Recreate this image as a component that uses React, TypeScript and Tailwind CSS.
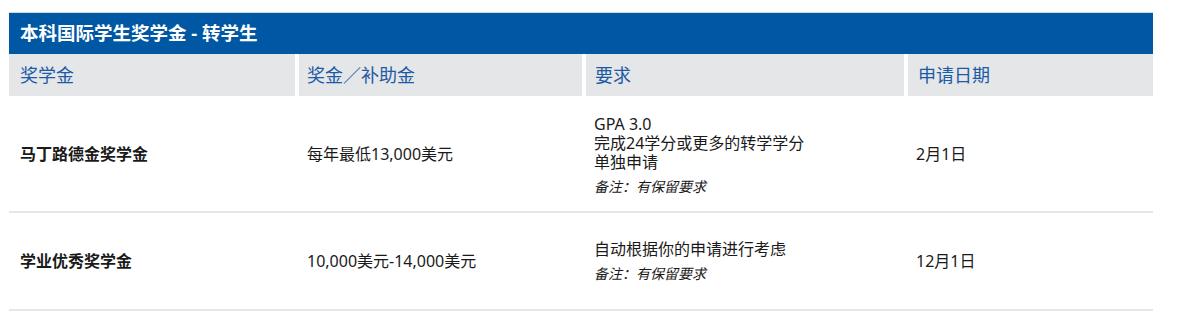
import React from "react";

const font = { fontFamily: '"Noto Sans", "Noto Sans CJK SC", sans-serif' };

export default function App() {
  return (
    <div className="w-[1179px] h-[326px] bg-white pt-[12px] pl-[9px]" style={font}>
      <div className="w-[1144px]">
        <div className="border-t border-[#d3dae2] bg-[#0057a4] h-[42px] flex items-center pl-[11px]">
          <span className="text-white font-bold text-[18.5px] leading-none">本科国际学生奖学金 - 转学生</span>
        </div>
        <div className="grid grid-cols-[286px_283px_318px_1fr] gap-x-[4px] h-[42px] text-[#1c5aa5] text-[18px]">
          <div className="bg-[#e5e6e8] flex items-center pl-[11px]">奖学金</div>
          <div className="bg-[#e5e6e8] flex items-center pl-[8px]">奖金／补助金</div>
          <div className="bg-[#e5e6e8] flex items-center pl-[9px]">要求</div>
          <div className="bg-[#e5e6e8] flex items-center pl-[10px]">申请日期</div>
        </div>
        <div className="grid grid-cols-[286px_283px_318px_1fr] gap-x-[4px] h-[117px] border-b-2 border-[#e6e6e6] text-[#1a1a1a] text-[16px]">
          <div className="flex items-center pl-[11px] font-bold">马丁路德金奖学金</div>
          <div className="flex items-center pl-[8px]">每年最低13,000美元</div>
          <div className="flex flex-col justify-center pl-[8px] pt-[3px]">
            <div className="leading-[19px]">GPA 3.0</div>
            <div className="leading-[19px]">完成24学分或更多的转学学分</div>
            <div className="leading-[19px]">单独申请</div>
            <div className="mt-[6px] text-[14px] italic leading-[18px]">备注：有保留要求</div>
          </div>
          <div className="flex items-center pl-[8px]">2月1日</div>
        </div>
        <div className="grid grid-cols-[286px_283px_318px_1fr] gap-x-[4px] h-[98px] border-b-2 border-[#e6e6e6] text-[#1a1a1a] text-[16px]">
          <div className="flex items-center pl-[11px] font-bold">学业优秀奖学金</div>
          <div className="flex items-center pl-[8px]">10,000美元-14,000美元</div>
          <div className="flex flex-col justify-center pl-[8px]">
            <div className="leading-[19px]">自动根据你的申请进行考虑</div>
            <div className="mt-[6px] text-[14px] italic leading-[18px]">备注：有保留要求</div>
          </div>
          <div className="flex items-center pl-[8px]">12月1日</div>
        </div>
      </div>
    </div>
  );
}
